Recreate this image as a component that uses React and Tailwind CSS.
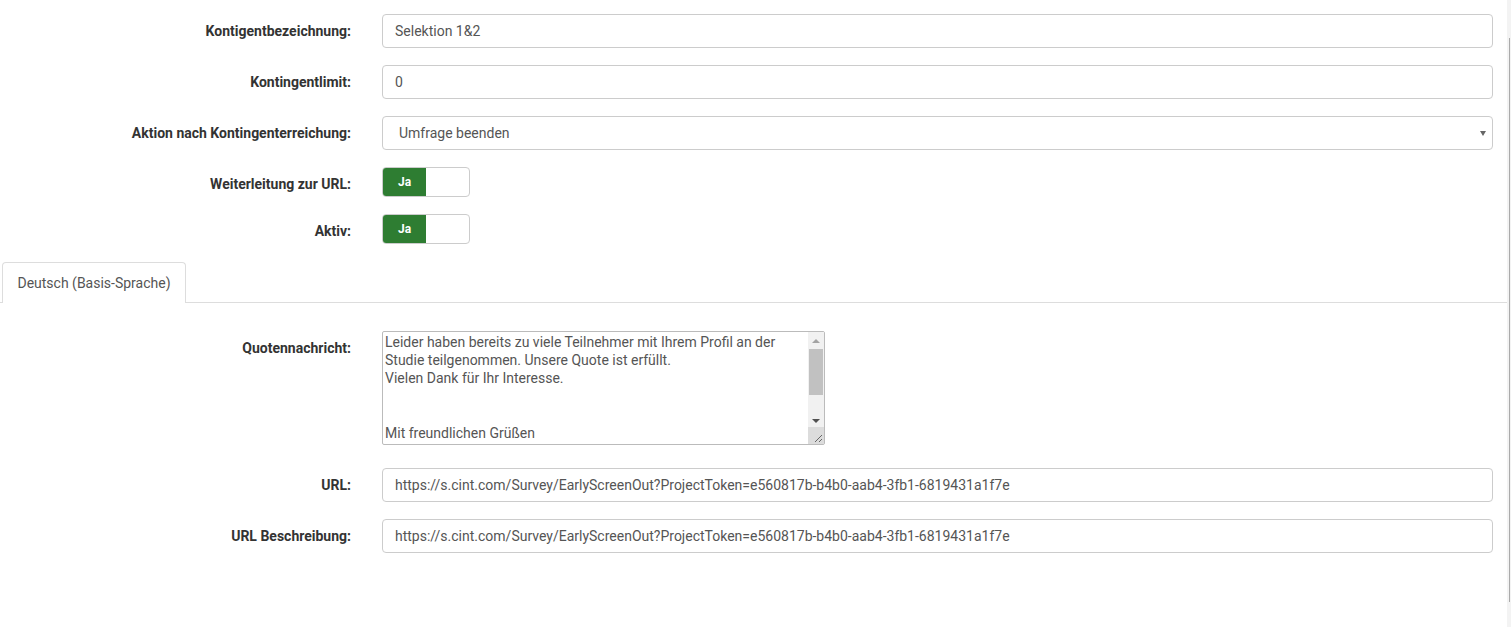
import React from 'react';

const font = { fontFamily: 'Roboto, "Liberation Sans", Arial, sans-serif' };

// One label/field row of the quota form
const Row = ({ label, children, className = '' }) => (
  <div className={`flex items-start ${className}`}>
    <label className="w-[351px] shrink-0 pt-[7px] text-right text-[14px] leading-[20px] font-bold text-[#333]">
      {label}
    </label>
    <div className="ml-[31px] flex-1">{children}</div>
  </div>
);

const TextInput = ({ value }) => (
  <div className="flex h-[34px] items-center rounded-[4px] border border-[#ccc] bg-white px-[12px] text-[14px] text-[#555]">
    {value}
  </div>
);

const SelectBox = ({ value }) => (
  <div className="flex h-[34px] items-center justify-between rounded-[4px] border border-[#ccc] bg-white pl-[16px] pr-[6px] text-[14px] text-[#555]">
    <span>{value}</span>
    <span className="h-0 w-0 border-x-[3.5px] border-t-[5px] border-x-transparent border-t-[#666]" />
  </div>
);

const Switch = () => (
  <div className="flex h-[30px] w-[88px] overflow-hidden rounded-[4px] border border-[#ccc] bg-white">
    <div className="flex w-[43px] items-center justify-center bg-[#2e7d32] text-[12px] font-bold text-white">Ja</div>
    <div className="flex-1" />
  </div>
);

// Textarea drawn with a classic scrollbar on the right
const MessageBox = ({ lines }) => (
  <div className="flex h-[114px] w-[443px] rounded-[2px] border border-[#bbb] bg-white">
    <div className="flex-1 overflow-hidden pl-[2px] pt-[1px] text-[14px] leading-[18.2px] text-[#555]">
      {lines.map((l, i) => (
        <div key={i} className="h-[18.2px] whitespace-nowrap">{l}</div>
      ))}
    </div>
    <div className="flex w-[16px] flex-col bg-[#f1f1f1]">
      <div className="flex h-[17px] items-center justify-center">
        <span className="h-0 w-0 border-x-[4px] border-b-[4px] border-x-transparent border-b-[#a3a3a3]" />
      </div>
      <div className="mx-[1px] h-[46px] bg-[#c1c1c1]" />
      <div className="flex flex-1 items-end justify-center pb-[4px]">
        <span className="h-0 w-0 border-x-[4px] border-t-[4px] border-x-transparent border-t-[#505050]" />
      </div>
      <div className="relative h-[17px] bg-[#dcdcdc]">
        <svg className="absolute right-[1px] bottom-[1px]" width="9" height="9" viewBox="0 0 9 9">
          <path d="M8 1 L1 8 M8 5 L5 8" stroke="#666" strokeWidth="1" fill="none" />
        </svg>
      </div>
    </div>
  </div>
);

const url = 'https://s.cint.com/Survey/EarlyScreenOut?ProjectToken=e560817b-b4b0-aab4-3fb1-6819431a1f7e';

export default function App() {
  return (
    <div className="flex min-h-screen bg-white" style={font}>
      <div className="flex-1 pt-[14px]">
        <div className="pr-[14px]">
          <Row label="Kontigentbezeichnung:"><TextInput value="Selektion 1&2" /></Row>
          <Row label="Kontingentlimit:" className="mt-[17px]"><TextInput value="0" /></Row>
          <Row label="Aktion nach Kontingenterreichung:" className="mt-[17px]"><SelectBox value="Umfrage beenden" /></Row>
          <Row label="Weiterleitung zur URL:" className="mt-[17px]"><Switch /></Row>
          <Row label="Aktiv:" className="mt-[17px]"><Switch /></Row>
        </div>

        {/* language tabs */}
        <div className="mt-[18px] flex border-b border-[#ddd]">
          <div className="ml-[2px] -mb-px flex h-[41px] w-[184px] items-center justify-center rounded-t-[4px] border border-b-0 border-[#ddd] bg-white text-[14px] text-[#555]">
            Deutsch (Basis-Sprache)
          </div>
        </div>

        <div className="pr-[14px] pt-[28px]">
          <Row label="Quotennachricht:">
            <MessageBox
              lines={[
                'Leider haben bereits zu viele Teilnehmer mit Ihrem Profil an der',
                'Studie teilgenommen. Unsere Quote ist erfüllt.',
                'Vielen Dank für Ihr Interesse.',
                '',
                '',
                'Mit freundlichen Grüßen',
              ]}
            />
          </Row>
          <Row label="URL:" className="mt-[23px]"><TextInput value={url} /></Row>
          <Row label="URL Beschreibung:" className="mt-[17px]"><TextInput value={url} /></Row>
        </div>
      </div>

      {/* page scrollbar strip */}
      <div className="flex w-[4px] flex-col bg-[#f3f3f3] pt-[38px] pb-[25px]">
        <div className="ml-[2px] w-px flex-1 bg-[#aaa]" />
      </div>
    </div>
  );
}
